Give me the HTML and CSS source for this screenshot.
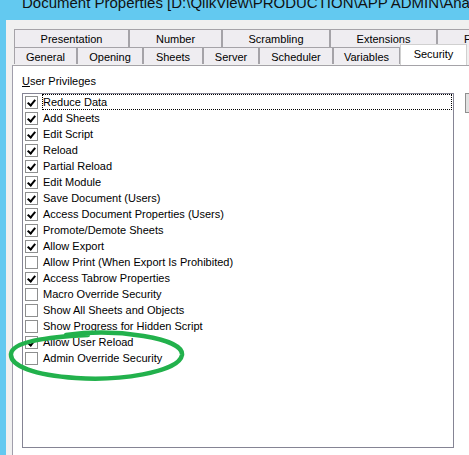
FILE: index.html
```html
<!DOCTYPE html>
<html>
<head>
<meta charset="utf-8">
<link rel="stylesheet" href="styles.css">
</head>
<body>
<div class="titlebar"><div class="title">Document Properties [D:\QlikView\PRODUCTION\APP ADMIN\Analysis.qvw]</div></div>
<div class="frame">
  <div class="tabs">
    <div class="row row1">
      <div class="tab w115">Presentation</div>
      <div class="tab w93">Number</div>
      <div class="tab w108">Scrambling</div>
      <div class="tab w107">Extensions</div>
      <div class="tab w40">Fonts</div>
    </div>
    <div class="row row2">
      <div class="tab w63">General</div>
      <div class="tab w66">Opening</div>
      <div class="tab w60">Sheets</div>
      <div class="tab w56">Server</div>
      <div class="tab w74">Scheduler</div>
      <div class="tab w67">Variables</div>
      <div class="tab w67 active">Security</div>
    </div>
  </div>
  <div class="panel">
    <div class="label"><u>U</u>ser Privileges</div>
    <div class="content">
      <div class="listbox">
        <div class="item"><span class="cb on"></span><span class="txt focus">Reduce Data</span></div>
        <div class="item"><span class="cb on"></span><span class="txt">Add Sheets</span></div>
        <div class="item"><span class="cb on"></span><span class="txt">Edit Script</span></div>
        <div class="item"><span class="cb on"></span><span class="txt">Reload</span></div>
        <div class="item"><span class="cb on"></span><span class="txt">Partial Reload</span></div>
        <div class="item"><span class="cb on"></span><span class="txt">Edit Module</span></div>
        <div class="item"><span class="cb on"></span><span class="txt">Save Document (Users)</span></div>
        <div class="item"><span class="cb on"></span><span class="txt">Access Document Properties (Users)</span></div>
        <div class="item"><span class="cb on"></span><span class="txt">Promote/Demote Sheets</span></div>
        <div class="item"><span class="cb on"></span><span class="txt">Allow Export</span></div>
        <div class="item"><span class="cb"></span><span class="txt">Allow Print (When Export Is Prohibited)</span></div>
        <div class="item"><span class="cb on"></span><span class="txt">Access Tabrow Properties</span></div>
        <div class="item"><span class="cb"></span><span class="txt">Macro Override Security</span></div>
        <div class="item"><span class="cb"></span><span class="txt">Show All Sheets and Objects</span></div>
        <div class="item"><span class="cb"></span><span class="txt">Show Progress for Hidden Script</span></div>
        <div class="item"><span class="cb on"></span><span class="txt">Allow User Reload</span></div>
        <div class="item"><span class="cb"></span><span class="txt">Admin Override Security</span></div>
      </div>
      <div class="sidebtn"></div>
    </div>
  </div>
</div>
<svg class="circle" width="184" height="54" viewBox="0 0 184 54">
  <path d="M60 5 C 110 -2, 178 8, 176 25 C 173 43, 110 51, 70 48 C 28 45, 4 36, 5 24 C 6 12, 40 7, 82 5" fill="none" stroke="#22b14c" stroke-width="4.5" stroke-linecap="round"/>
</svg>
</body>
</html>
```

FILE: styles.css
```css
html, body {
  margin: 0;
  padding: 0;
}
body {
  background: #63c9f0;
  width: 469px;
  height: 455px;
  overflow: hidden;
  position: relative;
  font-family: "Liberation Sans", Arial, sans-serif;
  font-size: 11px;
  color: #000;
}
.titlebar {
  height: 20px;
  overflow: hidden;
  padding-left: 22px;
  white-space: nowrap;
}
.title {
  font-family: "Liberation Sans", Arial, sans-serif;
  font-size: 15px;
  line-height: 18px;
  margin-top: -6px;
  color: #111;
}
.frame {
  margin-left: 6px;
  height: 435px;
  background: #f0f0f0;
  padding: 9px 0 0 6px;
  box-sizing: border-box;
  display: flex;
  flex-direction: column;
}
.tabs {
  margin-left: 2px;
  display: flex;
  flex-direction: column;
}
.row {
  display: flex;
  white-space: nowrap;
}
.tab {
  box-sizing: border-box;
  flex: none;
  background: #efedf1;
  border: 1px solid #a5a3a8;
  border-bottom: none;
  text-align: center;
  overflow: hidden;
}
.row1 .tab {
  height: 18px;
  line-height: 19px;
}
.row2 .tab {
  height: 17px;
  line-height: 18px;
}
.tab.active {
  background: #fff;
  height: 21px;
  margin-top: -3px;
  line-height: 18px;
  position: relative;
  z-index: 2;
  border-color: #d0d0d0;
}
.w115 { width: 115px; }
.w93 { width: 93px; }
.w108 { width: 108px; }
.w107 { width: 107px; }
.w40 { width: 40px; text-align: left; padding-left: 26px; }
.w63 { width: 63px; }
.w66 { width: 66px; }
.w60 { width: 60px; }
.w56 { width: 56px; }
.w74 { width: 74px; }
.w67 { width: 67px; }
.panel {
  flex: 1;
  background: #fff;
  border-top: 1px solid #a5a3a8;
  border-left: 1px solid #a09eab;
  padding: 9px 0 0 9px;
}
.label {
  line-height: 13px;
  height: 13px;
  margin-bottom: 5px;
}
.content {
  display: flex;
  align-items: flex-start;
}
.listbox {
  width: 432px;
  height: 355px;
  box-sizing: border-box;
  border: 1px solid #858494;
  display: flex;
  flex-direction: column;
  flex: none;
}
.item {
  height: 16px;
  display: flex;
  align-items: center;
  padding-left: 2px;
}
.cb {
  width: 13px;
  height: 13px;
  box-sizing: border-box;
  border: 1px solid #8e8f8f;
  background: #fff;
  flex: none;
  margin-right: 4px;
  position: relative;
}
.cb.on::after {
  content: "";
  position: absolute;
  left: 2px;
  top: 0px;
  width: 3px;
  height: 6px;
  border: solid #000;
  border-width: 0 2px 2px 0;
  transform: translate(1px, 1px) rotate(40deg);
  transform-origin: center;
}
.txt {
  flex: 1;
  height: 16px;
  line-height: 16px;
  padding-left: 1px;
  box-sizing: border-box;
  margin-right: 1px;
}
.txt.focus {
  outline: 1px dotted #000;
  outline-offset: -1px;
}
.sidebtn {
  margin-left: 11px;
  width: 14px;
  height: 20px;
  flex: none;
  box-sizing: border-box;
  background: #e1e1e1;
  border: 1px solid #8f8f8f;
}
.circle {
  position: absolute;
  left: 6px;
  top: 330px;
}
```
